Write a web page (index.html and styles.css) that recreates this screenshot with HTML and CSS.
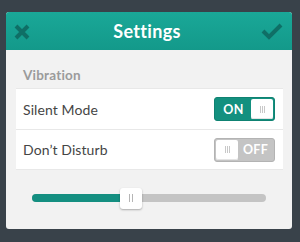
FILE: index.html
```html
<!DOCTYPE html>
<html>
<head>
<meta charset="utf-8">
<link rel="stylesheet" href="styles.css">
</head>
<body>
<div class="panel">
  <div class="header">
    <svg class="icon-close" width="18" height="18" viewBox="0 0 18 18"><path d="M3 3 L15 15 M15 3 L3 15" stroke="#0f6f66" stroke-width="4" stroke-linecap="butt" fill="none"/></svg>
    <div class="title">Settings</div>
    <svg class="icon-check" width="22" height="18" viewBox="0 0 22 18"><path d="M2 9 L8 15 L20 3" stroke="#0f6f66" stroke-width="4" stroke-linecap="butt" stroke-linejoin="miter" fill="none"/></svg>
  </div>
  <div class="body">
    <div class="section-label">Vibration</div>
    <div class="list">
      <div class="row">
        <span class="row-label">Silent Mode</span>
        <div class="toggle on"><span class="toggle-text">ON</span><span class="knob"><i></i><i></i><i></i></span></div>
      </div>
      <div class="row">
        <span class="row-label">Don’t Disturb</span>
        <div class="toggle off"><span class="knob"><i></i><i></i><i></i></span><span class="toggle-text">OFF</span></div>
      </div>
    </div>
    <div class="slider">
      <div class="track">
        <div class="fill" style="width:38%"></div>
        <div class="thumb"><i></i><i></i></div>
      </div>
    </div>
  </div>
</div>
</body>
</html>
```

FILE: styles.css
```css
html, body {
  margin: 0;
  padding: 0;
}
body {
  background: #39424a;
  width: 300px;
  height: 242px;
  font-family: "Lato", "Open Sans", sans-serif;
  overflow: hidden;
}
.panel {
  margin: 12px 0 0 6px;
  width: 286px;
  height: 217px;
  background: #f2f2f2;
  border-radius: 3px;
  overflow: hidden;
  display: flex;
  flex-direction: column;
}
.header {
  height: 38px;
  flex: none;
  background: linear-gradient(#1aa898, #13998a);
  display: flex;
  align-items: center;
  justify-content: space-between;
  padding: 0 9px 0 7px;
  box-sizing: border-box;
}
.icon-close {
  margin-top: 2px;
}
.title {
  color: #ffffff;
  font-weight: 700;
  font-size: 18px;
  letter-spacing: 0.3px;
  margin-left: 2px;
}
.body {
  flex: 1;
  padding: 0 9px 0 10px;
  display: flex;
  flex-direction: column;
}
.section-label {
  height: 38px;
  box-sizing: border-box;
  padding: 17px 0 0 7px;
  font-size: 13.5px;
  line-height: 16px;
  color: #9b9b9b;
  font-weight: 700;
  letter-spacing: 0.2px;
}
.list {
  background: #ffffff;
  border-top: 1px solid #e8e8e8;
  border-bottom: 1px solid #e8e8e8;
}
.row {
  height: 40px;
  box-sizing: border-box;
  display: flex;
  align-items: center;
  justify-content: space-between;
  padding: 0 8px 0 7px;
}
.row + .row {
  border-top: 1px solid #e8e8e8;
}
.row-label {
  font-size: 14px;
  color: #454545;
  letter-spacing: 0.1px;
}
.toggle {
  width: 61px;
  height: 24px;
  box-sizing: border-box;
  border-radius: 3px;
  display: flex;
  align-items: center;
  padding: 1px;
  font-size: 12.5px;
  font-weight: 700;
  color: #ffffff;
}
.toggle.on {
  background: #13907f;
  border: 1px solid #0f8272;
}
.toggle.off {
  background: #c4c4c4;
  border: 1px solid #b3b3b3;
}
.toggle-text {
  flex: 1;
  text-align: center;
  letter-spacing: 0.3px;
}
.knob {
  width: 22px;
  height: 20px;
  background: #ffffff;
  border-radius: 2px;
  display: flex;
  align-items: center;
  justify-content: center;
  gap: 1px;
  box-shadow: inset 0 -1px 0 #e4e4e4;
}
.knob i, .thumb i {
  display: block;
  width: 1px;
  height: 7px;
  background: #c8c8c8;
}
.slider {
  flex: 1;
  display: flex;
  align-items: center;
  padding: 0 17px 3px 16px;
}
.track {
  position: relative;
  flex: 1;
  height: 8px;
  background: #c4c4c4;
  border-radius: 4px;
  display: flex;
  align-items: center;
}
.fill {
  height: 8px;
  background: #148f81;
  border-radius: 4px 0 0 4px;
}
.thumb {
  width: 22px;
  height: 21px;
  margin-left: -1px;
  background: #ffffff;
  border-radius: 3px;
  box-shadow: 0 1px 2px rgba(0,0,0,0.3);
  display: flex;
  align-items: center;
  justify-content: center;
  gap: 2px;
  flex: none;
}
.thumb i {
  background: #b5b5b5;
  height: 8px;
}
```
